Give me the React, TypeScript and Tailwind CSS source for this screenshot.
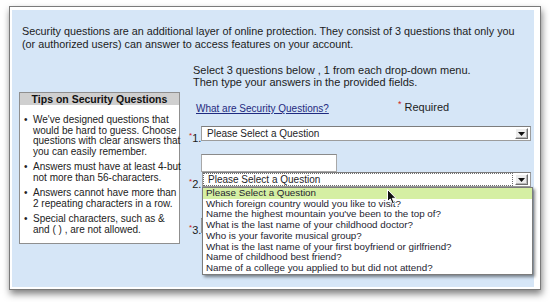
import React from "react";

const Arrow = () => (
  <div className="flex items-center justify-center w-[13px] h-[11px] bg-[#ededed] border-t border-l border-t-[#ffffff] border-l-[#ffffff] border-r border-b border-r-[#6f6f6f] border-b-[#6f6f6f] shadow-[inset_-1px_-1px_0_#b8b8b8]">
    <svg width="7" height="4" viewBox="0 0 7 4">
      <polygon points="0,0 7,0 3.5,4" fill="#111" />
    </svg>
  </div>
);

const Select = ({ focused, width, hidden }: { focused?: boolean; width: string; hidden?: boolean }) => (
  <div className={`flex items-center h-[15px] bg-white border border-[#9c9c9c] border-t-[#7d7d7d] ${width}`}>
    <div
      className={
        focused
          ? "flex-1 h-[13px] mr-[2px] border border-dotted border-[#6d6d6d] pl-[4px] text-[10px] leading-[11px] text-[#1e1e28] whitespace-nowrap"
          : "flex-1 h-[13px] pl-[5px] text-[10px] leading-[13px] text-[#1e1e28] whitespace-nowrap"
      }
    >
      {hidden ? "" : "Please Select a Question"}
    </div>
    <div className="mr-[2px]">
      <Arrow />
    </div>
  </div>
);

const Label = ({ n }: { n: string }) => (
  <div className="w-[12px] -mb-[5px] text-[11px] leading-[12px] whitespace-nowrap text-[#1c1c1c]">
    <span className="relative -top-[4px] text-[8px] text-[#d42020]">*</span>
    {n}.
  </div>
);

const items = [
  "Please Select a Question",
  "Which foreign country would you like to visit?",
  "Name the highest mountain you've been to the top of?",
  "What is the last name of your childhood doctor?",
  "Who is your favorite musical group?",
  "What is the last name of your first boyfriend or girlfriend?",
  "Name of childhood best friend?",
  "Name of a college you applied to but did not attend?",
];

const tips: string[][] = [
  [
    "We've designed questions that",
    "would be hard to guess. Choose",
    "questions with clear answers that",
    "you can easily remember.",
  ],
  ["Answers must have at least 4-but", "not more than 56-characters."],
  ["Answers cannot have more than", "2 repeating characters in a row."],
  ["Special characters, such as &", "and ( ) , are not allowed."],
];

export default function App() {
  return (
    <div
      className="relative w-[550px] h-[302px] bg-white overflow-hidden text-[#1c1c1c]"
      style={{ fontFamily: '"Liberation Sans", Arial, sans-serif' }}
    >
      <div className="ml-[9px] mt-[6px] w-[532px] h-[284px] border border-[#7a7a7a] bg-white pt-[3px] pl-[2px] pr-[6px] pb-[2px] shadow-[1px_4px_7px_rgba(0,0,0,0.5)]">
        <div className="w-full h-full bg-[#d6e6f7]">
          <p className="pt-[15px] pl-[10px] text-[10.8px] leading-[13px] whitespace-nowrap">
            Security questions are an additional layer of online protection. They consist of 3 questions that only you
            <br />
            (or authorized users) can answer to access features on your account.
          </p>
          <div className="flex items-start mt-[13px]">
            {/* Tips column */}
            <div className="ml-[7px] w-[161px] mt-[28px] border border-[#8f8f8f] bg-white">
              <div className="h-[12px] leading-[12px] bg-[#cfcfcf] text-center text-[10.5px] font-bold text-[#111] whitespace-nowrap">
                Tips on Security Questions
              </div>
              <div className="pt-[10px] pb-[8px] pl-[4px] flex flex-col gap-[5px] text-[10px] leading-[10.5px] text-[#222]">
                {tips.map((t, i) => (
                  <div key={i} className="flex">
                    <span className="w-[9px] shrink-0">•</span>
                    <div className="whitespace-nowrap">
                      {t.map((l, j) => (
                        <div key={j}>{l}</div>
                      ))}
                    </div>
                  </div>
                ))}
              </div>
            </div>
            {/* Form column */}
            <div className="ml-[9px] w-[344px]">
              <div className="pl-[4px] text-[11px] leading-[12px] whitespace-nowrap">
                Select 3 questions below , 1 from each drop-down menu.
                <br />
                Then type your answers in the provided fields.
              </div>
              <div className="flex items-center mt-[13px] pl-[7px] h-[12px] whitespace-nowrap">
                <div className="w-[202px]">
                  <a href="#" className="text-[10px] leading-[12px] text-[#1f2a80] underline">
                    What are Security Questions?
                  </a>
                </div>
                <span className="relative -top-[2px] text-[9px] text-[#d42020]">*</span>
                <span className="ml-[3px] text-[11px] leading-[12px]">Required</span>
              </div>
              <div className="flex items-end mt-[13px]">
                <Label n="1" />
                <Select width="w-[330px]" />
              </div>
              <div className="mt-[13px] ml-[12px] w-[136px] h-[18px] bg-white border border-[#a8a8a8] border-t-[#8a8a8a]" />
              <div className="flex items-end">
                <div className="w-[13px]">
                  <Label n="2" />
                </div>
                <div className="relative">
                  <Select width="w-[329px]" focused />
                  <div className="absolute left-0 top-full z-10 w-[331px] bg-white border border-[#7c7c7c] shadow-[2px_2px_3px_rgba(0,0,0,0.45)]">
                    {items.map((it, i) => (
                      <div
                        key={i}
                        className={`pl-[3px] text-[9.8px] leading-[10.7px] whitespace-nowrap text-[#1e1e30] ${
                          i === 0 ? "bg-[#d5efa3]" : ""
                        }`}
                      >
                        {it}
                      </div>
                    ))}
                  </div>
                </div>
              </div>
              <div className="flex items-end mt-[31px]">
                <Label n="3" />
                <Select width="w-[330px]" hidden />
              </div>
            </div>
          </div>
        </div>
      </div>
      {/* mouse cursor */}
      <svg className="absolute left-[387px] top-[189px] z-20" width="11" height="16" viewBox="0 0 11 16">
        <path d="M0.5,0.5 L0.5,12.5 L3.3,10 L5.4,15 L7.4,14.1 L5.3,9.3 L9,9.3 Z" fill="#111" stroke="#fff" strokeWidth="1" />
      </svg>
    </div>
  );
}
